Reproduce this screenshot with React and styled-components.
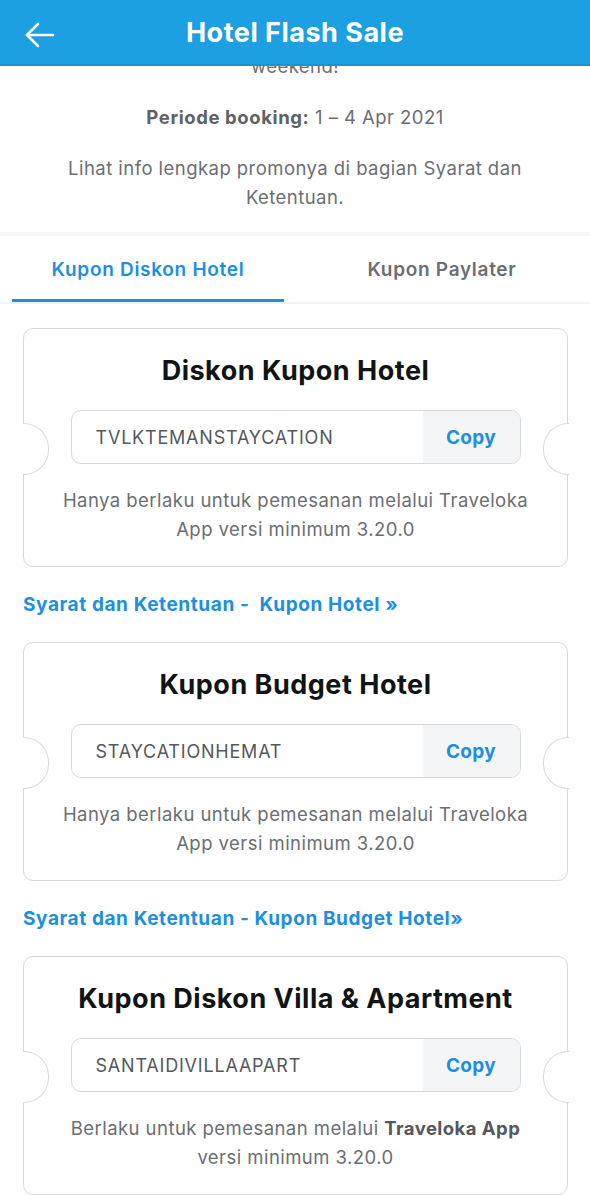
import styled, { createGlobalStyle } from 'styled-components';

const GlobalStyle = createGlobalStyle`
  html, body {
    margin: 0;
    padding: 0;
    background: #fff;
    font-family: Inter, "Noto Sans", "Liberation Sans", sans-serif;
  }
  * { box-sizing: border-box; }
`;

const Header = styled.header`
  position: fixed;
  top: 0;
  left: 0;
  right: 0;
  height: 66px;
  background: #1ca0e1;
  border-bottom: 2px solid #1893d2;
  display: flex;
  align-items: center;
  justify-content: center;
  z-index: 10;
  h1 {
    margin: 0;
    color: #fff;
    font-size: 27px;
    font-weight: 700;
    letter-spacing: 0.5px;
  }
`;

const BackButton = styled.div`
  position: absolute;
  left: 24px;
  top: 22px;
  width: 32px;
  height: 28px;
`;

const Page = styled.main`
  padding-top: 52px;
`;

const Intro = styled.section`
  text-align: center;
  color: #6b6e72;
  font-size: 18.5px;
  line-height: 29px;
  letter-spacing: 0.45px;
  padding: 0 30px 20px;
  border-bottom: 4px solid #f6f6f6;
  p {
    margin: 0 0 22px;
  }
  p:last-child {
    margin-bottom: 0;
  }
  b {
    color: #5e6165;
    font-weight: 700;
    letter-spacing: 0.6px;
  }
`;

const Tabs = styled.nav`
  display: grid;
  grid-template-columns: 1fr 1fr;
  gap: 22px;
  padding: 0 12px;
  border-bottom: 2px solid #f3f3f3;
`;

const Tab = styled.div`
  height: 66px;
  display: flex;
  align-items: center;
  justify-content: center;
  font-size: 19px;
  font-weight: 600;
  letter-spacing: 0.7px;
  color: ${p => (p.active ? '#1d8fe0' : '#6b6e72')};
  border-bottom: 3px solid ${p => (p.active ? '#1d8fe0' : 'transparent')};
  padding-top: 3px;
`;

const Content = styled.div`
  padding: 24px 22px 0 23px;
`;

const Card = styled.div`
  position: relative;
  border: 1.5px solid #d6d8db;
  border-radius: 10px;
  padding: 25px 20px 22px;
  text-align: center;
  &::before, &::after {
    content: '';
    position: absolute;
    top: 50%;
    width: 25px;
    height: 50px;
    margin-top: -25px;
    background: #fff;
    border: 1.5px solid #d6d8db;
  }
  &::before {
    left: -1.5px;
    border-left: none;
    border-radius: 0 25px 25px 0 / 0 25px 25px 0;
  }
  &::after {
    right: -1.5px;
    border-right: none;
    border-radius: 25px 0 0 25px / 25px 0 0 25px;
  }
`;

const CardTitle = styled.h2`
  margin: 0;
  font-size: 27px;
  line-height: 34px;
  font-weight: 700;
  color: #111416;
  letter-spacing: 0.5px;
`;

const CodeBox = styled.div`
  margin: 22px auto 0;
  width: 450px;
  height: 54px;
  border: 1.5px solid #d6d8db;
  border-radius: 10px;
  display: flex;
  overflow: hidden;
  position: relative;
  z-index: 1;
`;

const Code = styled.div`
  flex: 1;
  display: flex;
  align-items: center;
  padding-left: 24px;
  font-size: 18px;
  letter-spacing: 0.8px;
  color: #55585c;
  text-align: left;
`;

const CopyButton = styled.div`
  width: 97px;
  background: #f4f5f7;
  display: flex;
  align-items: center;
  justify-content: center;
  color: #1d8fe0;
  font-size: 19px;
  font-weight: 700;
  letter-spacing: 0.3px;
`;

const Note = styled.p`
  margin: 22px 0 0;
  font-size: 18.5px;
  line-height: 29px;
  letter-spacing: 0.45px;
  color: #6b6e72;
  b {
    color: #55585c;
    font-weight: 700;
  }
`;

const TermsLink = styled.a`
  display: block;
  margin: 26px 0 25px;
  font-size: 19px;
  line-height: 24px;
  font-weight: 700;
  letter-spacing: 0.6px;
  color: #1d8fe0;
  text-decoration: none;
  white-space: pre;
`;

function Coupon({ title, code, children }) {
  return (
    <Card>
      <CardTitle>{title}</CardTitle>
      <CodeBox>
        <Code>{code}</Code>
        <CopyButton>Copy</CopyButton>
      </CodeBox>
      <Note>{children}</Note>
    </Card>
  );
}

export default function App() {
  return (
    <>
      <GlobalStyle />
      <Header>
        <BackButton>
          <svg width="32" height="28" viewBox="0 0 32 28" fill="none" stroke="#fff" strokeWidth="2.6" strokeLinecap="round" strokeLinejoin="round">
            <line x1="3" y1="13" x2="29" y2="13" />
            <polyline points="14,2 3,13 14,24" />
          </svg>
        </BackButton>
        <h1>Hotel Flash Sale</h1>
      </Header>
      <Page>
        <Intro>
          <p>weekend!</p>
          <p><b>Periode booking:</b> 1 – 4 Apr 2021</p>
          <p>Lihat info lengkap promonya di bagian Syarat dan<br />Ketentuan.</p>
        </Intro>
        <Tabs>
          <Tab active>Kupon Diskon Hotel</Tab>
          <Tab>Kupon Paylater</Tab>
        </Tabs>
        <Content>
          <Coupon title="Diskon Kupon Hotel" code="TVLKTEMANSTAYCATION">
            Hanya berlaku untuk pemesanan melalui Traveloka<br />App versi minimum 3.20.0
          </Coupon>
          <TermsLink href="#">{'Syarat dan Ketentuan -  Kupon Hotel »'}</TermsLink>
          <Coupon title="Kupon Budget Hotel" code="STAYCATIONHEMAT">
            Hanya berlaku untuk pemesanan melalui Traveloka<br />App versi minimum 3.20.0
          </Coupon>
          <TermsLink href="#">Syarat dan Ketentuan - Kupon Budget Hotel»</TermsLink>
          <Coupon title="Kupon Diskon Villa & Apartment" code="SANTAIDIVILLAAPART">
            Berlaku untuk pemesanan melalui <b>Traveloka App</b><br />versi minimum 3.20.0
          </Coupon>
        </Content>
      </Page>
    </>
  );
}
